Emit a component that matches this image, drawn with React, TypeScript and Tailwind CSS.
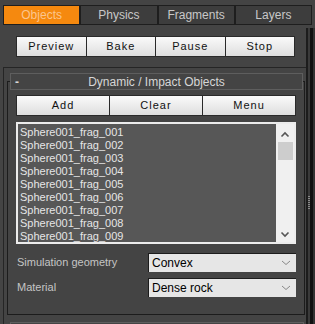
const items = Array.from({ length: 9 }, (_, i) => `Sphere001_frag_00${i + 1}`);

function Chevron({ up }: { up?: boolean }) {
  return (
    <svg width="10" height="7" viewBox="0 0 10 7">
      <path
        d={up ? "M1.5 5.5 L5 2 L8.5 5.5" : "M1.5 1.5 L5 5 L8.5 1.5"}
        fill="none"
        stroke="#555"
        strokeWidth="1.6"
      />
    </svg>
  );
}

function Dropdown({ value }: { value: string }) {
  return (
    <div className="w-[148px] h-[19px] flex items-center justify-between bg-[#e6e6e6] border-t border-l border-[#1c1c1c] pl-[3px] pr-[5px] text-[12px] text-black">
      <span>{value}</span>
      <svg width="10" height="6" viewBox="0 0 10 6">
        <path d="M1 1 L5 4.5 L9 1" fill="none" stroke="#888" strokeWidth="1" />
      </svg>
    </div>
  );
}

export default function App() {
  const font = { fontFamily: '"Liberation Sans", Arial, sans-serif' };
  const btn =
    "flex-1 h-[19px] flex items-center justify-center bg-gradient-to-b from-[#fafafa] to-[#dedede] border-r border-[#2a2a2a] last:border-r-0 text-[11px] tracking-[1px] text-[#111]";

  return (
    <div className="w-[315px] h-[324px] bg-[#444444] overflow-hidden flex flex-col" style={font}>
      {/* tabs */}
      <div className="mt-[5px] mx-[3px] flex gap-[2px] bg-[#1e1e1e] p-[1px] h-[25px]">
        <div className="flex-1 flex items-center justify-center bg-[#f5890f] text-[12px] text-[#fcc58e]">
          Objects
        </div>
        <div className="flex-1 flex items-center justify-center bg-[#3d3d3d] text-[12px] text-[#c8c8c8]">
          Physics
        </div>
        <div className="flex-1 flex items-center justify-center bg-[#3d3d3d] text-[12px] text-[#c8c8c8]">
          Fragments
        </div>
        <div className="flex-1 flex items-center justify-center bg-[#3d3d3d] text-[12px] text-[#c8c8c8]">
          Layers
        </div>
      </div>

      <div className="flex flex-1 mt-[3px]">
        <div className="flex-1 flex flex-col">
          {/* action buttons */}
          <div className="mt-[8px] ml-[16px] mr-[11px] flex border border-[#2a2a2a]">
            <div className={btn}>Preview</div>
            <div className={btn}>Bake</div>
            <div className={btn}>Pause</div>
            <div className={btn}>Stop</div>
          </div>

          {/* frame */}
          <div className="mt-[10px] ml-[3px] flex-1 border-l border-t border-[#252525] pt-[13px]">
            <div className="ml-[3px] mr-[1px] border border-[#1c1c1c] pb-[17px]">
              <div className="relative -mt-[9px] ml-[2px] mr-[1px] h-[17px] bg-[#444444] border border-[#5e5e5e] flex items-center text-[12px] text-[#d6d6d6]">
                <span className="w-[14px] pl-[4px] font-bold">-</span>
                <span className="flex-1 text-center pr-[14px]">Dynamic / Impact Objects</span>
              </div>

              <div className="mt-[5px] mx-[8px] flex border border-[#2a2a2a]">
                <div className={btn}>Add</div>
                <div className={btn}>Clear</div>
                <div className={btn}>Menu</div>
              </div>

              <div className="mt-[6px] mx-[8px] h-[122px] border-2 border-[#ececec] bg-[#575757] flex">
                <div className="flex-1 pl-[2px] pt-[2px] text-[11px] leading-[13px] text-[#e6e6e6]">
                  {items.map((t) => (
                    <div key={t}>{t}</div>
                  ))}
                </div>
                <div className="w-[18px] bg-[#f0f0f0] flex flex-col items-center">
                  <div className="mt-[7px]">
                    <Chevron up />
                  </div>
                  <div className="mt-[4px] w-[15px] h-[18px] bg-[#cdcdcd]" />
                  <div className="flex-1" />
                  <div className="mb-[4px]">
                    <Chevron />
                  </div>
                </div>
              </div>

              <div className="mt-[9px] ml-[9px] mr-[8px] flex items-center justify-between">
                <span className="text-[11px] text-[#c4c4c4]">Simulation geometry</span>
                <Dropdown value="Convex" />
              </div>
              <div className="mt-[6px] ml-[9px] mr-[8px] flex items-center justify-between">
                <span className="text-[11px] text-[#c4c4c4]">Material</span>
                <Dropdown value="Dense rock" />
              </div>
            </div>

            <div className="mt-[7px] ml-[6px] mr-[2px] h-[12px] border border-[#5e5e5e] flex justify-center">
              <span className="mt-[2px] w-[1px] h-[3px] bg-[#cfcfcf]" />
            </div>
          </div>
        </div>

        {/* panel scroll strip */}
        <div className="w-[9px] flex">
          <div className="w-[2px] bg-[#1c1c1c]" />
          <div className="w-[2px] bg-[#3a3a3a] flex flex-col items-center">
            <div className="mt-[168px] w-[2px] h-[13px] bg-[repeating-linear-gradient(#8a8a8a_0_1px,transparent_1px_2px)]" />
          </div>
          <div className="w-[3px] bg-[#111111]" />
          <div className="w-[2px] bg-[#333333]" />
        </div>
      </div>
    </div>
  );
}
